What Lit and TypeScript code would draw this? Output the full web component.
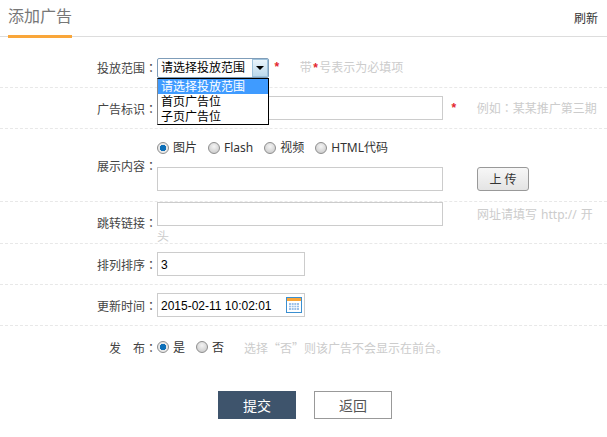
import { html, css, LitElement } from 'lit';
import { customElement, state } from 'lit/decorators.js';

@customElement('app-root')
export class AppRoot extends LitElement {
  static override styles = css`
    :host {
      display: block;
      font-family: "Noto Sans", "Noto Sans CJK SC", sans-serif;
      font-size: 12px;
      color: #333;
      background: #fff;
      min-height: 437px;
    }

    .head {
      display: flex;
      justify-content: space-between;
      align-items: flex-end;
      height: 36px;
      padding: 0 9px 0 8px;
      border-bottom: 1px solid #ddd;
      margin-bottom: 10px;
    }

    .title {
      width: 64px;
      height: 38px;
      margin-bottom: -2px;
      box-sizing: border-box;
      padding-top: 5px;
      font-size: 16px;
      line-height: 22px;
      color: #777;
      border-bottom: 3px solid #f9a63a;
    }

    .refresh {
      font-size: 12px;
      line-height: 16px;
      padding-bottom: 9px;
      color: #333;
    }

    .row {
      display: flex;
      align-items: center;
      border-bottom: 1px dashed #e8e8e8;
    }

    .row.last {
      border-bottom: none;
    }

    .h40 { height: 40px; }
    .h41 { height: 41px; }
    .h72 { height: 72px; }
    .h42 { height: 42px; }

    .label {
      width: 157px;
      flex: none;
      text-align: right;
      color: #444;
      line-height: 16px;
      padding-top: 2px;
    }

    /* the TC face centres full-width colons, as the reference does */
    .colon {
      font-family: "Noto Sans CJK TC", sans-serif;
    }

    .gap {
      display: inline-block;
      width: 12px;
    }

    .field {
      flex: none;
      width: 440px;
    }

    .flat {
      display: flex;
      align-items: center;
    }

    input.text {
      box-sizing: border-box;
      height: 24px;
      padding: 1px 3px 0;
      border: 1px solid #ccc;
      font-family: "Liberation Sans", sans-serif;
      font-size: 12px;
      color: #000;
      outline: none;
      background: #fff;
      vertical-align: top;
    }

    .w286 { width: 286px; }
    .w148 { width: 148px; }

    .select {
      position: relative;
      box-sizing: border-box;
      width: 112px;
      height: 20px;
      margin-top: 2px;
      border: 1px solid #7f9db9;
      border-radius: 2px;
      display: flex;
      align-items: center;
      color: #000;
      background: #fff;
      padding-left: 3px;
      line-height: 16px;
    }

    .select-text {
      flex: 1;
      white-space: nowrap;
    }

    .arrow {
      width: 16px;
      height: 18px;
      flex: none;
      box-sizing: border-box;
      border: 1px solid #9ec2dc;
      background: linear-gradient(#eaf4fb, #bcd9ec);
      display: flex;
      align-items: center;
      justify-content: center;
    }

    .menu {
      position: absolute;
      top: 19px;
      left: -1px;
      width: 112px;
      box-sizing: border-box;
      border: 1px solid #000;
      border-left-color: #888;
      background: #fff;
      z-index: 2;
    }

    .opt {
      height: 15px;
      line-height: 15px;
      padding-left: 3px;
      color: #000;
      white-space: nowrap;
    }

    .opt.on {
      background: #3f9bff;
      color: #fff;
    }

    .star {
      color: #e3262e;
      font-family: "Liberation Sans", sans-serif;
      font-weight: bold;
      font-size: 12px;
      padding: 0 1.5px;
    }

    .hint {
      color: #ccc;
    }

    .cjk {
      font-family: "Noto Sans CJK SC", sans-serif;
    }

    .radios {
      display: flex;
      align-items: center;
      height: 18px;
      margin-bottom: 10px;
      line-height: 18px;
    }

    .radio {
      width: 12px;
      height: 12px;
      flex: none;
      box-sizing: border-box;
      border-radius: 50%;
      border: 1px solid #8e8e8e;
      background: radial-gradient(circle at 50% 35%, #f4f4f4, #c4c4c4);
      margin-right: 4px;
    }

    .radio.on {
      background: radial-gradient(circle, #0d6fb8 0 3px, #e8e8e8 3.5px);
    }

    .radio-label {
      margin-right: 11px;
      color: #333;
    }

    .upload {
      width: 52px;
      height: 24px;
      margin-left: 34px;
      padding: 0;
      border: 1px solid #999;
      border-radius: 3px;
      background: linear-gradient(#f7f7f7, #e4e4e4);
      font-family: inherit;
      font-size: 12px;
      color: #333;
    }

    .linkfield {
      align-self: flex-start;
      line-height: 15px;
      word-spacing: 1px;
    }

    .linkfield input {
      margin-right: 34px;
      margin-bottom: 3px;
      vertical-align: middle;
    }

    .date {
      position: relative;
      width: 148px;
    }

    .date svg {
      position: absolute;
      right: 3px;
      top: 4px;
    }

    .actions {
      display: flex;
      gap: 18px;
      padding: 23px 0 0 218px;
    }

    .btn {
      box-sizing: border-box;
      width: 78px;
      height: 28px;
      font-family: inherit;
      font-size: 14px;
      padding: 0;
    }

    .btn.primary {
      border: none;
      background: #3e546c;
      color: #fff;
    }

    .btn.plain {
      border: 1px solid #999;
      background: #fff;
      color: #555;
    }
  `;

  @state()
  private kind = 'image';

  private radio(on: boolean, text: string) {
    return html`<span class="radio ${on ? 'on' : ''}"></span><span class="radio-label">${text}</span>`;
  }

  override render() {
    return html`
      <div class="head">
        <div class="title">添加广告</div>
        <div class="refresh">刷新</div>
      </div>

      <div class="row h40">
        <div class="label">投放范围<span class="colon">：</span></div>
        <div class="field flat">
          <div class="select">
            <span class="select-text">请选择投放范围</span>
            <span class="arrow">
              <svg width="8" height="4" viewBox="0 0 8 4"><path d="M0 0H8L4 4Z" fill="#000"/></svg>
            </span>
            <div class="menu">
              <div class="opt on">请选择投放范围</div>
              <div class="opt">首页广告位</div>
              <div class="opt">子页广告位</div>
            </div>
          </div>
          <span class="star" style="margin-left:4px">*</span>
          <span class="hint" style="margin-left:19px">带<span class="star">*</span>号表示为必填项</span>
        </div>
      </div>

      <div class="row h40">
        <div class="label">广告标识<span class="colon">：</span></div>
        <div class="field flat">
          <input class="text w286" />
          <span class="star" style="margin-left:7px">*</span>
          <span class="hint" style="margin-left:19px">例如<span class="colon">：</span>某某推广第三期</span>
        </div>
      </div>

      <div class="row h72">
        <div class="label">展示内容<span class="colon">：</span></div>
        <div class="field">
          <div class="radios">
            ${this.radio(this.kind === 'image', '图片')}
            ${this.radio(false, 'Flash')}
            ${this.radio(false, '视频')}
            ${this.radio(false, 'HTML代码')}
          </div>
          <div class="flat">
            <input class="text w286" />
            <button class="upload">上 传</button>
          </div>
        </div>
      </div>

      <div class="row h41">
        <div class="label">跳转链接<span class="colon">：</span></div>
        <div class="field linkfield">
          <input class="text w286" /><span class="hint">网址请填写 http:// 开 头</span>
        </div>
      </div>

      <div class="row h40">
        <div class="label">排列排序<span class="colon">：</span></div>
        <div class="field"><input class="text w148" .value=${'3'} /></div>
      </div>

      <div class="row h40">
        <div class="label">更新时间<span class="colon">：</span></div>
        <div class="field">
          <div class="date">
            <input class="text w148" .value=${'2015-02-11 10:02:01'} />
            <svg width="16" height="16" viewBox="0 0 16 16">
              <rect x="0.5" y="0.5" width="15" height="15" fill="#fff" stroke="#3b8fd0"/>
              <rect x="1" y="1" width="14" height="3" fill="#f9a63a"/>
              <rect x="3" y="6" width="10" height="7" fill="#9cc0ea"/>
              <path d="M5.5 6v7M8 6v7M10.5 6v7M3 8.5h10M3 10.5h10" stroke="#fff" stroke-width="0.7"/>
            </svg>
          </div>
        </div>
      </div>

      <div class="row h42 last">
        <div class="label">发<span class="gap"></span>布<span class="colon">：</span></div>
        <div class="field flat">
          ${this.radio(true, '是')}
          ${this.radio(false, '否')}
          <span class="hint cjk" style="margin-left:9px">选择“否”则该广告不会显示在前台。</span>
        </div>
      </div>

      <div class="actions">
        <button class="btn primary">提交</button>
        <button class="btn plain">返回</button>
      </div>
    `;
  }
}
